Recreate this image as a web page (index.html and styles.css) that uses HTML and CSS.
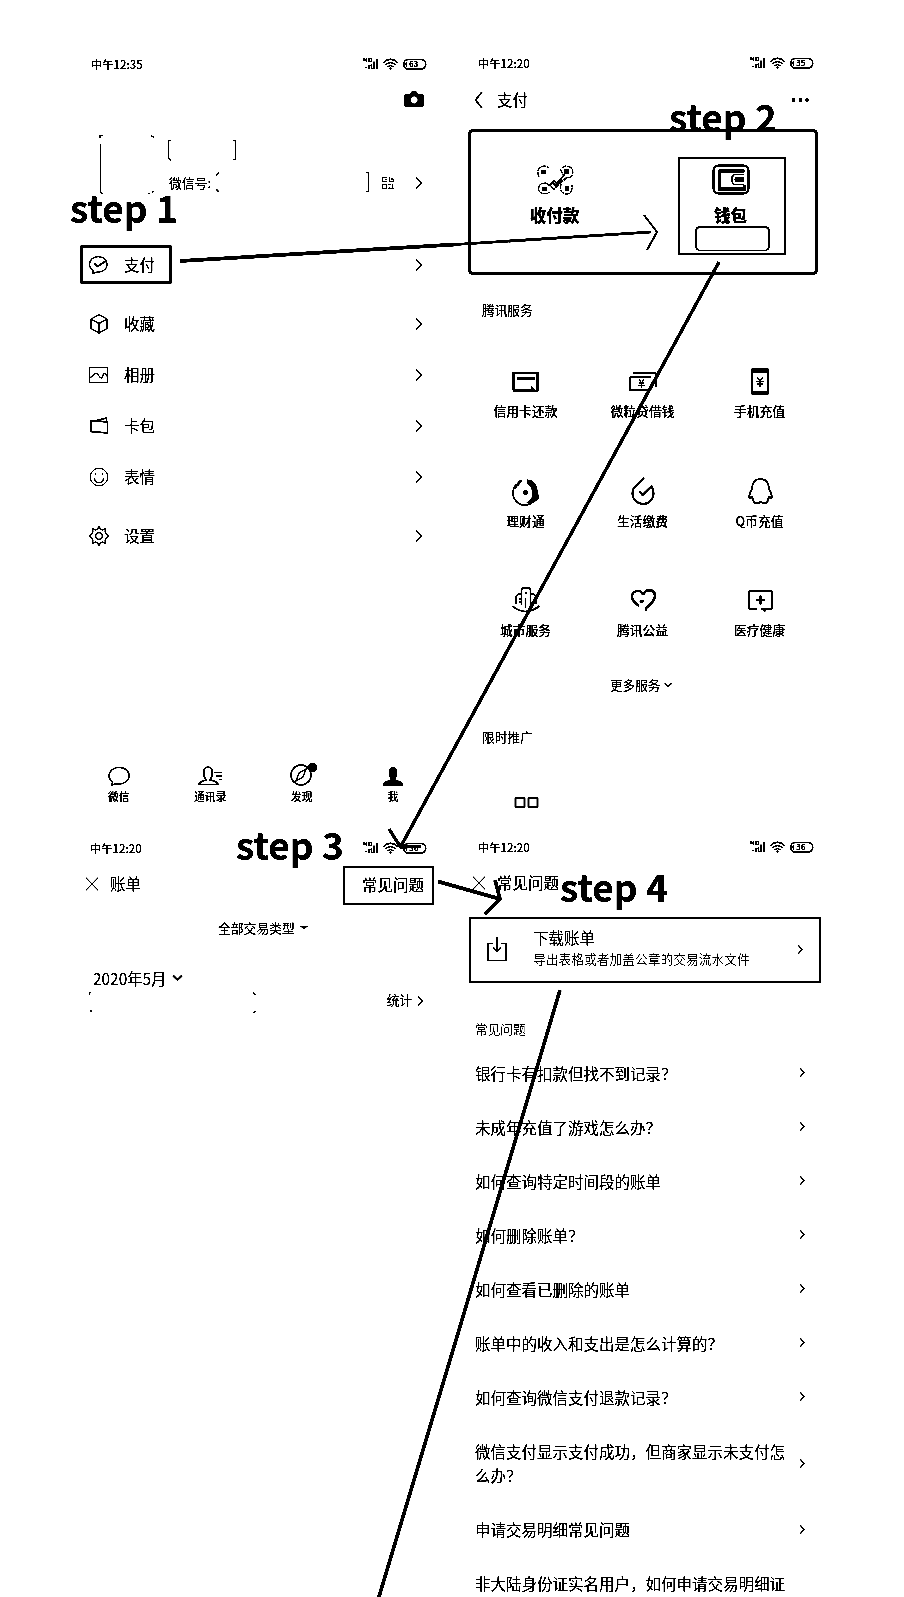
FILE: index.html
```
<!DOCTYPE html>
<html lang="zh-CN">
<head>
<meta charset="utf-8">
<title>step 1 - step 4</title>
<link rel="stylesheet" href="styles.css">
</head>
<body>
<svg class="defs" width="0" height="0">
  <symbol id="chev" viewBox="0 0 8 14"><path d="M1 1.5 6.3 7 1 12.5"/></symbol>
  <symbol id="signal" viewBox="0 0 64 14">
    <path d="M1 1v3M3.500 1v4M1 3h2M6 1v4M6 1.500h2.500v3H6M2 10.500h2M6 8v4M8 8l1 4" stroke-width=".9"/>
    <path d="M8.500 7v5M11 4.500V12M14 2V12" stroke-width="1.400"/>
    <path d="M20.500 5.500q7-6.500 14 0M22.500 7.800q5-4.500 10 0M24.500 10q3-2.500 6 0" stroke-width="1.200"/><circle class="f" cx="27.500" cy="11.500" r="1"/>
    <rect x="40.700" y="2.500" width="22" height="9.500" rx="4.500" stroke-width="1.400"/><path d="M44 5q-2 2 0 4.500"/>
  </symbol>
</svg>
<main class="page">
  <section class="screen s1">
    <div class="status"><span>中午12:35</span><span class="sig"><svg width="64" height="14"><use href="#signal"/></svg><b>63</b></span></div>
    <div class="camera"><svg width="20" height="16" viewBox="0 0 20 16"><path class="f" fill-rule="evenodd" d="M.5 3.500h5l2-3h5l2 3h5v12H.5ZM10 5.300a3.700 3.700 0 1 0 .1 0Z"/></svg></div>
    <div class="profile">
      <svg class="avatar" width="56" height="60" viewBox="0 0 56 60"><path d="M1.500 10v48l2 1.500M1 4V1.500h3M52 1.500l3 2M49 59.500h2M53 58.500l2-1.500"/></svg>
      <div class="who">
        <svg width="70" height="21" viewBox="0 0 70 21"><path d="M4 .7H1.500v17.500l2.500 2M66 .7h2.500v19H66"/></svg>
        <div class="wxid"><span>微信号:</span><svg class="idmask" width="155" height="21" viewBox="0 0 155 21"><path d="M4 .7 1 3.500M1 17l3 3M151 .7h2.500v19H151"/></svg>
        <svg class="qr" width="12" height="12" viewBox="0 0 12 12"><path d="M1 .5h4M.5.500v4h4M3 2.500h2M7.500.500v4h4V2H9M.5 7.500v4h4v-4zM6.500 7.500H9M7 10.500h1M10.500 7v4.500M6.500 11.500h5" stroke-width="1"/></svg>
        <svg class="chev" width="8" height="14"><use href="#chev"/></svg></div>
      </div>
    </div>
    <ul class="menu">
      <li class="pay"><svg width="20" height="20" viewBox="0 0 20 20"><path d="M4 15.500A8.700 7.700 0 1 1 8 17L4 18.500Z"/><path d="m5.500 8.500 3 3L17 6" stroke-width="1.600"/></svg><span>支付</span><svg class="chev" width="8" height="14"><use href="#chev"/></svg></li>
      <li><svg width="20" height="20" viewBox="0 0 20 20"><path d="M10 .8 18 5v9.500L10 19l-8-4.500V5ZM2 5l8 4.500L18 5M10 9.500V19"/></svg><span>收藏</span><svg class="chev" width="8" height="14"><use href="#chev"/></svg></li>
      <li><svg width="20" height="20" viewBox="0 0 20 20"><path d="M.5 2.500h18v15H.5ZM1 12.500q2 0 4-3t5 1.500 4-.5 5 2"/></svg><span>相册</span><svg class="chev" width="8" height="14"><use href="#chev"/></svg></li>
      <li><svg width="20" height="20" viewBox="0 0 20 20"><path d="m2 4.500 16.500 1.500v11L2 15.500ZM8 4.500l9.500-2.500v4" stroke-width="1.400"/></svg><span>卡包</span><svg class="chev" width="8" height="14"><use href="#chev"/></svg></li>
      <li><svg width="20" height="20" viewBox="0 0 20 20"><circle cx="10" cy="10" r="8.700" stroke-width="1"/><path d="M5.500 7h2M12.500 7h2M5.500 11.500q.5 4 4.500 4t4.500-4"/></svg><span>表情</span><svg class="chev" width="8" height="14"><use href="#chev"/></svg></li>
      <li class="set"><svg width="20" height="20" viewBox="0 0 20 20"><path d="m8.300 3.300 1.700-2.800 1.700 2.800 1.600.6 3-1-.1 3.200.8 1.500 2.500 2.400-2.500 2.400-.8 1.500.1 3.200-3-1-1.600.6-1.700 2.800-1.700-2.800-1.600-.6-3 1 .1-3.200-.8-1.500L.5 10l2.500-2.400.8-1.500-.1-3.200 3 1Z" stroke-width="1.200"/><circle cx="10" cy="10" r="3.300"/></svg><span>设置</span><svg class="chev" width="8" height="14"><use href="#chev"/></svg></li>
    </ul>
    <nav class="tabs">
      <div><svg width="24" height="20" viewBox="0 0 24 20"><path d="M5.500 16A10 8.300 0 1 1 11 18l-2.500-.3-3.500 1.500Z" stroke-width="1.400"/></svg><span>微信</span></div>
      <div><svg width="24" height="20" viewBox="0 0 24 20"><path d="M1 18.500q0-3 7-4.500l-2-4q-1.500-9 4-9t4 9l-2 4q8 1.500 8 4.500ZM16 6.500h8M18 10h6M21 13.500h3" stroke-width="1.400"/></svg><span>通讯录</span></div>
      <div><svg width="28" height="24" viewBox="0 0 28 24"><circle cx="13" cy="13" r="10" stroke-width="1.400"/><path d="m18 7-3 8-7 4 3-8Z"/><circle class="f" cx="24.500" cy="5.500" r="4.500"/></svg><span>发现</span></div>
      <div><svg width="24" height="20" viewBox="0 0 24 20"><path class="f" d="M2 19.500v-2q1-2 8-4L8 10Q6.500 1 12 1t4 9l-2 3.500q7 2 8 4v2Z"/></svg><span>我</span></div>
    </nav>
  </section>

  <section class="screen s2">
    <div class="status"><span>中午12:20</span><span class="sig"><svg width="64" height="14"><use href="#signal"/></svg><b>35</b></span></div>
    <div class="bar"><svg width="16" height="18" viewBox="0 0 16 18"><path d="M10 1 3.500 9l6.500 8" stroke-width="1.500"/></svg><span>支付</span><svg class="dots" width="17" height="4" viewBox="0 0 17 4"><path class="f" d="M0 .5h3v3H0ZM7 .5h3v3H7ZM13.500 .5h3v3h-3Z"/></svg></div>
    <div class="paycard">
      <div class="tile"><svg width="38" height="32" viewBox="0 0 38 32"><g stroke-dasharray="5 .8"><path d="M3 13Q-1 4 8 2q3 0 5 2M26 4q2-3 8-1 5 4 1 10M10 19Q1 19 3 27q4 5 11 1M25 20q-2 10 6 10 6-1 5-9M24 5l4 7M35 13l-6 1"/><path d="m10 19 8 6 12-11M13 22l5-5 3 2 8-9" stroke-width="1.500"/></g><path class="f" d="M5 6h5v4H5ZM28 5h5v5h-5ZM6 23h5v4H6ZM29 22h4v5h-4ZM16 17l4 3 6-7v3l-6 7-5-4Z"/></svg><span class="rough">收付款</span></div>
      <div class="tile wallet"><svg width="38" height="32" viewBox="0 0 38 32"><rect x="1.500" y="1.500" width="35" height="28" rx="5" stroke-width="2"/><path d="M7 7h25.500M7.500 6v19h25v-4" stroke-width="3"/><path d="M32 10.500H22q-5 5 0 10h10" stroke-width="1.500"/><path class="f" d="M24 13h8v5h-8q-3-2.500 0-5Z"/></svg><span class="rough">钱包</span><i></i></div>
    </div>
    <h2>腾讯服务</h2>
    <div class="services">
      <div><svg width="30" height="30" viewBox="0 0 30 30"><path d="M2.500 24V7h24v18" stroke-width="1.900"/><path d="M6 12.500h18M2 24.500h18" stroke-width="2.600"/><path class="f" d="m20 20 7 6h-7Z"/></svg><span>信用卡还款</span></div>
      <div><svg width="30" height="30" viewBox="0 0 30 30"><path d="M5 7h23M28 7v14M2 11h21M2 11v13h20" stroke-width="1.700"/><path d="m11 13 2.500 4 2.500-4M10.500 17h6M10.500 19.500h6M13.500 17v5" stroke-width="1"/></svg><span>微粒贷借钱</span></div>
      <div><svg width="30" height="30" viewBox="0 0 30 30"><path class="f" fill-rule="evenodd" d="M8 2h14q2 0 2 2v23q0 2-2 2H8q-2 0-2-2V4q0-2 2-2ZM8 7v18h14V7Z"/><path d="M12 4h6" stroke="#fff"/><path d="m12 11 3 4 3-4M11.500 15.500h7M11.500 18h7M15 15v6"/></svg><span>手机充值</span></div>
      <div><svg width="30" height="30" viewBox="0 0 30 30"><path d="M6 8A11.500 11.500 0 0 0 22 26" stroke-width="1.500"/><path class="f" d="M4 14Q5 4 12 3.500L8 9Q6 10 4 14ZM16 3.500Q25 3.500 26.500 14l1.500 8Q23 29 15 27q8-4 6-12-1-5-5-8ZM12 15.500h1.500V14h2v1.500H17v2h-1.500V19h-2v-1.500H12Z"/></svg><span>理财通</span></div>
      <div><svg width="30" height="30" viewBox="0 0 30 30"><path d="M16 2 8 10Q4 13 4.500 18A10.500 10.500 0 0 0 25.500 17q0-3-2-7l-9 9-3-3.500" stroke-width="1.900"/></svg><span>生活缴费</span></div>
      <div><svg width="30" height="30" viewBox="0 0 30 30"><path d="M7 13Q7 3 15.500 3T24 13q3.500 5 2.500 9l-2.500-1-1.500 3q.5 3-2 3t-5-1q-3 2-5.500 1-2-1-1.500-3L7 21l-2.500 1Q3.500 18 7 13Z" stroke-width="1.700"/></svg><span>Q币充值</span></div>
      <div><svg width="30" height="30" viewBox="0 0 30 30"><path d="M1.500 21q12.500 11 27 0M5 19v-6q0-4 5-4M10.500 20V5q0-2 2-2h5q2 0 2 2v19M20 9q5 0 5 4v6M15 7v2M14.500 13v10M8 14h2M8 17h2" stroke-width="1.600"/></svg><span>城市服务</span></div>
      <div><svg width="30" height="30" viewBox="0 0 30 30"><path d="M11 21Q4 16 4 12q0-6 6-6 4 0 5 4" stroke-width="2.200"/><path d="M15 10q2-5 7-5 5 1 5 6 0 5-9 12v3M12 16q3 2 3-1" stroke-width="2.400"/></svg><span>腾讯公益</span></div>
      <div><svg width="30" height="30" viewBox="0 0 30 30"><path d="M12 24H6q-2 0-2-2V8q0-2 2-2h19q2 0 2 2v14q0 2-2 2H16" stroke-width="1.800"/><path d="M11 15h9M15.500 10.500v9" stroke-width="2.200"/><path class="f" d="M16 24h6l-2 3Z"/></svg><span>医疗健康</span></div>
    </div>
    <div class="more"><span>更多服务</span><svg width="9" height="6" viewBox="0 0 9 6"><path d="m.8 1 3.500 3.500L8 1"/></svg></div>
    <h2 class="promo">限时推广</h2>
    <svg class="boxes" width="26" height="11" viewBox="0 0 26 11"><path d="M1.500 1h9v9h-9ZM14.500 1h9v9h-9Z" stroke-width="1.700"/></svg>
  </section>

  <section class="screen s3">
    <div class="status"><span>中午12:20</span><span class="sig"><svg width="64" height="14"><use href="#signal"/></svg><b>36</b></span></div>
    <div class="bar"><svg width="14" height="14" viewBox="0 0 14 14"><path d="m.7.700 12.600 12.600M13.300.700.700 13.300" stroke-width="1.150"/></svg><span>账单</span><div class="faq">常见问题</div></div>
    <div class="types"><span>全部交易类型</span><svg width="8" height="4" viewBox="0 0 8 4"><path class="f" d="M0 0h8L4 3.500Z"/></svg></div>
    <div class="month"><span>2020年5月</span><svg width="11" height="8" viewBox="0 0 11 8"><path d="m1 1.500 4.500 4.500L10 1.500" stroke-width="1.800"/></svg></div>
    <div class="stats"><svg width="168" height="22" viewBox="0 0 168 22"><path d="M.5 3V.7H2M164 .7l3 2M1 18l2 2M164 21l3-2"/></svg><span>统计</span><svg class="chev" width="7" height="12"><use href="#chev"/></svg></div>
  </section>

  <section class="screen s4">
    <div class="status"><span>中午12:20</span><span class="sig"><svg width="64" height="14"><use href="#signal"/></svg><b>36</b></span></div>
    <div class="bar"><svg width="14" height="14" viewBox="0 0 14 14"><path d="m.7.700 12.600 12.600M13.300.700.700 13.300" stroke-width="1.150"/></svg><span>常见问题</span></div>
    <div class="download">
      <svg width="20" height="26" viewBox="0 0 20 26"><path d="M5.500 7.500H1v17h18v-17h-4.500M10 .5V15M6 11l4 4.500 4-4.500"/></svg>
      <div><strong>下载账单</strong><small>导出表格或者加盖公章的交易流水文件</small></div>
      <svg class="chev" width="7" height="11"><use href="#chev"/></svg>
    </div>
    <h2>常见问题</h2>
    <ul class="questions">
      <li><span>银行卡有扣款但找不到记录？</span><svg class="chev" width="7" height="11"><use href="#chev"/></svg></li>
      <li><span>未成年充值了游戏怎么办？</span><svg class="chev" width="7" height="11"><use href="#chev"/></svg></li>
      <li><span>如何查询特定时间段的账单</span><svg class="chev" width="7" height="11"><use href="#chev"/></svg></li>
      <li><span>如何删除账单？</span><svg class="chev" width="7" height="11"><use href="#chev"/></svg></li>
      <li><span>如何查看已删除的账单</span><svg class="chev" width="7" height="11"><use href="#chev"/></svg></li>
      <li><span>账单中的收入和支出是怎么计算的？</span><svg class="chev" width="7" height="11"><use href="#chev"/></svg></li>
      <li><span>如何查询微信支付退款记录？</span><svg class="chev" width="7" height="11"><use href="#chev"/></svg></li>
      <li><span>微信支付显示支付成功，但商家显示未支付怎<br>么办？</span><svg class="chev" width="7" height="11"><use href="#chev"/></svg></li>
      <li><span>申请交易明细常见问题</span><svg class="chev" width="7" height="11"><use href="#chev"/></svg></li>
      <li><span>非大陆身份证实名用户，如何申请交易明细证</span></li>
    </ul>
  </section>

  <svg class="arrows" width="904" height="1597" viewBox="0 0 904 1597">
    <path d="M180 261 455 244.500" stroke-width="3.500"/><path d="M455 244.500 651 232" stroke-width="2.600"/>
    <path d="M644 215 657 232 647 250" stroke-width="1.800"/>
    <path d="M719 262 401 846M389 829l11.500 18 20.500-.5" stroke-width="3.200"/>
    <path d="m438 881.500 62 17.500M495 880l5 19-15 15" stroke-width="3.400"/>
    <path d="M560 990Q507 1170 459 1330L378 1600" stroke-width="3.400"/>
  </svg>
  <div class="step n1">step 1</div>
  <div class="step n2">step 2</div>
  <div class="step n3">step 3</div>
  <div class="step n4">step 4</div>
</main>
</body>
</html>
```
FILE: styles.css
```
*, *::before { box-sizing: border-box; }
html, body { margin: 0; background: #fff; }
body {
  font-family: "Noto Sans CJK SC", sans-serif;
  font-size: 15.5px;
  color: #000;
}
.defs { position: absolute; }
.page {
  position: relative;
  width: 904px;
  height: 1597px;
  overflow: hidden;
  padding-left: 77px;
  display: grid;
  grid-template-columns: 382px 362px;
  grid-template-rows: 826px 771px;
  background: #fff;
  filter: brightness(.78) contrast(10);
}
svg { display: block; flex: none; fill: none; stroke: #000; stroke-width: 1.15; overflow: visible; }
.f { fill: #000; stroke: none; }
ul { list-style: none; margin: 0; padding: 0; }
.screen { display: flex; flex-direction: column; min-width: 0; min-height: 0; }
.chev { margin-left: auto; stroke-width: 1.6; }

.status {
  flex: none;
  height: 18px;
  display: flex;
  align-items: center;
  justify-content: space-between;
  font-size: 11.3px;
  font-weight: 500;
  line-height: 16px;
}
.status > span:first-child { margin-top: -1px; }
.s1 .status { margin-top: 55px; padding: 0 32px 0 14px; }
.s2 .status { margin-top: 54px; padding: 0 7px 0 19px; }
.s3 .status { margin-top: 13px; padding: 0 32px 0 13px; }
.s4 .status { margin-top: 12px; padding: 0 7px 0 19px; }
.sig { display: flex; align-items: center; width: 64px; }
.sig b { width: 20px; margin-left: -18px; font-size: 8px; line-height: 14px; font-weight: 700; }

.camera { height: 62px; padding: 18px 35px 0 0; display: flex; justify-content: flex-end; }
.profile { height: 70px; padding-left: 22px; display: flex; }
.avatar { margin-top: -1px; }
.who { flex: 1; padding: 5px 36px 0 12px; }
.wxid { display: flex; align-items: center; height: 21px; margin-top: 11px; font-size: 12.8px; line-height: 19px; }
.wxid span { width: 50px; white-space: nowrap; padding-left: 2px; }
.idmask { margin-left: -2px; }
.qr { margin-left: 12px; }

.menu { margin-top: 35px; }
.menu li { height: 51px; padding: 0 36px 0 12px; display: flex; align-items: center; }
.menu li > span { margin: -2px 0 0 15px; font-weight: 400; }
.menu .pay {
  height: 39px;
  margin: 5px 0 14px 3px;
  padding-left: 9px;
  position: relative;
}
.pay::before { content: ""; position: absolute; left: 0; top: 0; width: 92px; height: 39px; border: 3px solid #000; border-radius: 2px; }
.menu .set { margin-top: 8px; }

.tabs { margin: auto 20px 22px -4px; display: grid; grid-template-columns: repeat(4, 91.5px); }
.tabs div { height: 42px; display: flex; flex-direction: column; align-items: center; justify-content: flex-end; font-size: 10.8px; line-height: 16px; font-weight: 500; }
.tabs span { margin-top: 2px; }

.bar { flex: none; display: flex; align-items: center; height: 40px; font-weight: 400; }
.bar span { line-height: 22px; padding-bottom: 3px; }
.s2 .bar { margin-top: 8px; padding: 0 12px 0 13px; }
.s2 .bar span { margin-left: 9px; }
.dots { margin-left: auto; }
.paycard {
  flex: none;
  height: 146px;
  width: 350px;
  margin: 9px 0 0 9px;
  border: 3px solid #000;
  border-radius: 5px;
  display: flex;
  justify-content: space-between;
  padding: 25px 29px 0 29px;
}
.tile { width: 109px; height: 98px; padding-top: 7px; display: flex; flex-direction: column; align-items: center; }
.wallet { width: 108px; border: 2px solid #000; padding: 5px 3px 0 0; }
.rough { margin-top: 7px; font-size: 16.5px; line-height: 25px; font-weight: 900; }
.wallet i { width: 75px; height: 25px; margin: -2px 0 0 4px; flex: none; border: 2px solid #000; border-bottom-width: 1px; border-radius: 5px; background: #fff; position: relative; }
h2 { margin: 0; font-size: 12.7px; line-height: 20px; font-weight: 400; }
.s2 h2 { margin: 25px 0 0 23px; }
.services { margin: 46px 0 0 8px; display: grid; grid-template-columns: repeat(3, 117px); grid-auto-rows: 109.5px; }
.services div { display: flex; flex-direction: column; align-items: center; font-size: 12.8px; line-height: 20px; font-weight: 500; }
.services span { margin-top: 5px; }
.more { margin: -20px 0 0 151px; display: flex; align-items: center; gap: 4px; font-size: 12.6px; line-height: 20px; }
.s2 .promo { margin-top: 32px; }
.boxes { margin: 50px 0 0 55px; }

.s3 .bar { margin-top: 7px; padding-left: 8px; }
.s3 .bar span { margin-left: 11px; }
.faq { width: 91px; height: 39px; margin: 3px 25px 0 auto; padding-left: 17px; border: 2px solid #000; line-height: 32px; }
.types { margin: 15px 0 0 141px; height: 18px; display: flex; align-items: center; gap: 5px; font-size: 12.8px; line-height: 18px; }
.month { margin: 31px 0 0 16px; height: 20px; display: flex; align-items: center; gap: 5px; font-size: 15.4px; line-height: 20px; }
.stats { margin: 3px 0 0 12px; padding-right: 35px; height: 20px; display: flex; align-items: center; font-size: 12.7px; line-height: 18px; }
.stats > svg:first-child { margin-top: 3px; }
.stats span { margin-left: auto; margin-right: 5px; padding-bottom: 2px; }
.stats .chev { margin-left: 0; }

.s4 .bar { margin-top: 7px; padding-left: 13px; }
.s4 .bar span { margin-left: 11px; }
.download {
  flex: none;
  height: 66px;
  width: 352px;
  margin: 14px 0 0 10px;
  border: 2px solid #000;
  padding: 0 15px 0 16px;
  display: flex;
  align-items: center;
}
.download > svg { margin-top: -2px; }
.download div { margin: -4px 0 0 26px; display: flex; flex-direction: column; }
.download strong { font-weight: 400; line-height: 21px; }
.download small { font-size: 12.75px; line-height: 22px; font-weight: 300; white-space: nowrap; }
.s4 h2 { margin: 36px 0 0 16px; font-weight: 300; }
.questions { margin-top: 6.8px; }
.questions li { height: 54px; padding: 0 15px 0 16px; display: flex; align-items: center; line-height: 24.5px; white-space: nowrap; }
.questions li:nth-child(8) { height: 78.5px; }

.arrows { position: absolute; left: 0; top: 0; }
.step { position: absolute; font-size: 37px; line-height: 40px; font-weight: 700; white-space: nowrap; }
.n1 { left: 70px; top: 187px; }
.n2 { left: 669px; top: 96px; }
.n3 { left: 236px; top: 824px; }
.n4 { left: 560px; top: 866px; }
```
